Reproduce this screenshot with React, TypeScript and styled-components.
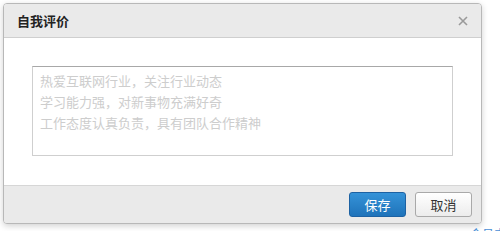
import React from "react";
import styled, { createGlobalStyle } from "styled-components";

const Global = createGlobalStyle`
  html, body { margin: 0; padding: 0; background: #fff; }
  body { font-family: "Liberation Sans", "Noto Sans CJK SC", sans-serif; overflow: hidden; }
  * { box-sizing: border-box; }
`;

const Page = styled.div`
  width: 500px;
  height: 231px;
  padding: 3px 0 0 3px;
  display: flex;
  flex-direction: column;
  overflow: hidden;
`;

const Dialog = styled.div`
  flex-shrink: 0;
  width: 479px;
  border: 1px solid #b8b8b8;
  border-radius: 4px;
  overflow: hidden;
  background: #fff;
  box-shadow: 0 2px 6px rgba(0, 0, 0, 0.18);
  display: flex;
  flex-direction: column;
`;

const Header = styled.div`
  flex-shrink: 0;
  height: 34px;
  background: #eaeaea;
  border-bottom: 1px solid #cfcfcf;
  display: flex;
  align-items: center;
  justify-content: space-between;
  padding: 0 12px 0 13px;
`;

const Title = styled.h3`
  margin: 0;
  font-family: "Noto Sans CJK SC", sans-serif;
  font-size: 13px;
  font-weight: 700;
  color: #222;
`;

const Close = styled.button`
  border: none;
  background: none;
  padding: 0;
  width: 12px;
  height: 12px;
  display: flex;
  align-items: center;
  justify-content: center;
  cursor: pointer;
`;

const Body = styled.div`
  flex-shrink: 0;
  padding: 28px 28px 29px 28px;
`;

const TextArea = styled.textarea`
  display: block;
  width: 100%;
  height: 90px;
  resize: none;
  border: 1px solid #cfcfcf;
  border-top-color: #a8a8a8;
  padding: 3px 7px;
  font-family: "Noto Sans CJK SC", sans-serif;
  font-size: 13px;
  line-height: 21px;
  color: #333;
  outline: none;
  &::placeholder { color: #cdcdcd; }
`;

const Footer = styled.div`
  flex-shrink: 0;
  height: 38px;
  background: #eaeaea;
  border-top: 1px solid #d6d6d6;
  display: flex;
  align-items: center;
  justify-content: flex-end;
  gap: 9px;
  padding: 0 9px 0 0;
`;

const Button = styled.button<{ $primary?: boolean }>`
  width: 57px;
  height: 25px;
  border-radius: 3px;
  font-family: "Noto Sans CJK SC", sans-serif;
  font-size: 13px;
  padding: 0;
  cursor: pointer;
  border: 1px solid ${(p) => (p.$primary ? "#1d62a3" : "#a9a9a9")};
  color: ${(p) => (p.$primary ? "#fff" : "#333")};
  background: ${(p) =>
    p.$primary
      ? "linear-gradient(#3593d8, #1f73ba)"
      : "linear-gradient(#ffffff, #ececec)"};
`;

const Below = styled.div`
  flex-shrink: 0;
  padding: 3px 0 0 467px;
  white-space: nowrap;
  font-family: "Noto Sans CJK SC", sans-serif;
  font-size: 12px;
  color: #4a8fd6;
  line-height: 14px;
`;

export default function App() {
  return (
    <>
      <Global />
      <Page>
        <Dialog>
          <Header>
            <Title>自我评价</Title>
            <Close aria-label="关闭">
              <svg width="10" height="10" viewBox="0 0 10 10">
                <path d="M1 1L9 9M9 1L1 9" stroke="#9a9a9a" strokeWidth="1.6" />
              </svg>
            </Close>
          </Header>
          <Body>
            <TextArea
              placeholder={"热爱互联网行业，关注行业动态\n学习能力强，对新事物充满好奇\n工作态度认真负责，具有团队合作精神"}
            />
          </Body>
          <Footer>
            <Button $primary>保存</Button>
            <Button>取消</Button>
          </Footer>
        </Dialog>
        <Below>会员中心</Below>
      </Page>
    </>
  );
}
